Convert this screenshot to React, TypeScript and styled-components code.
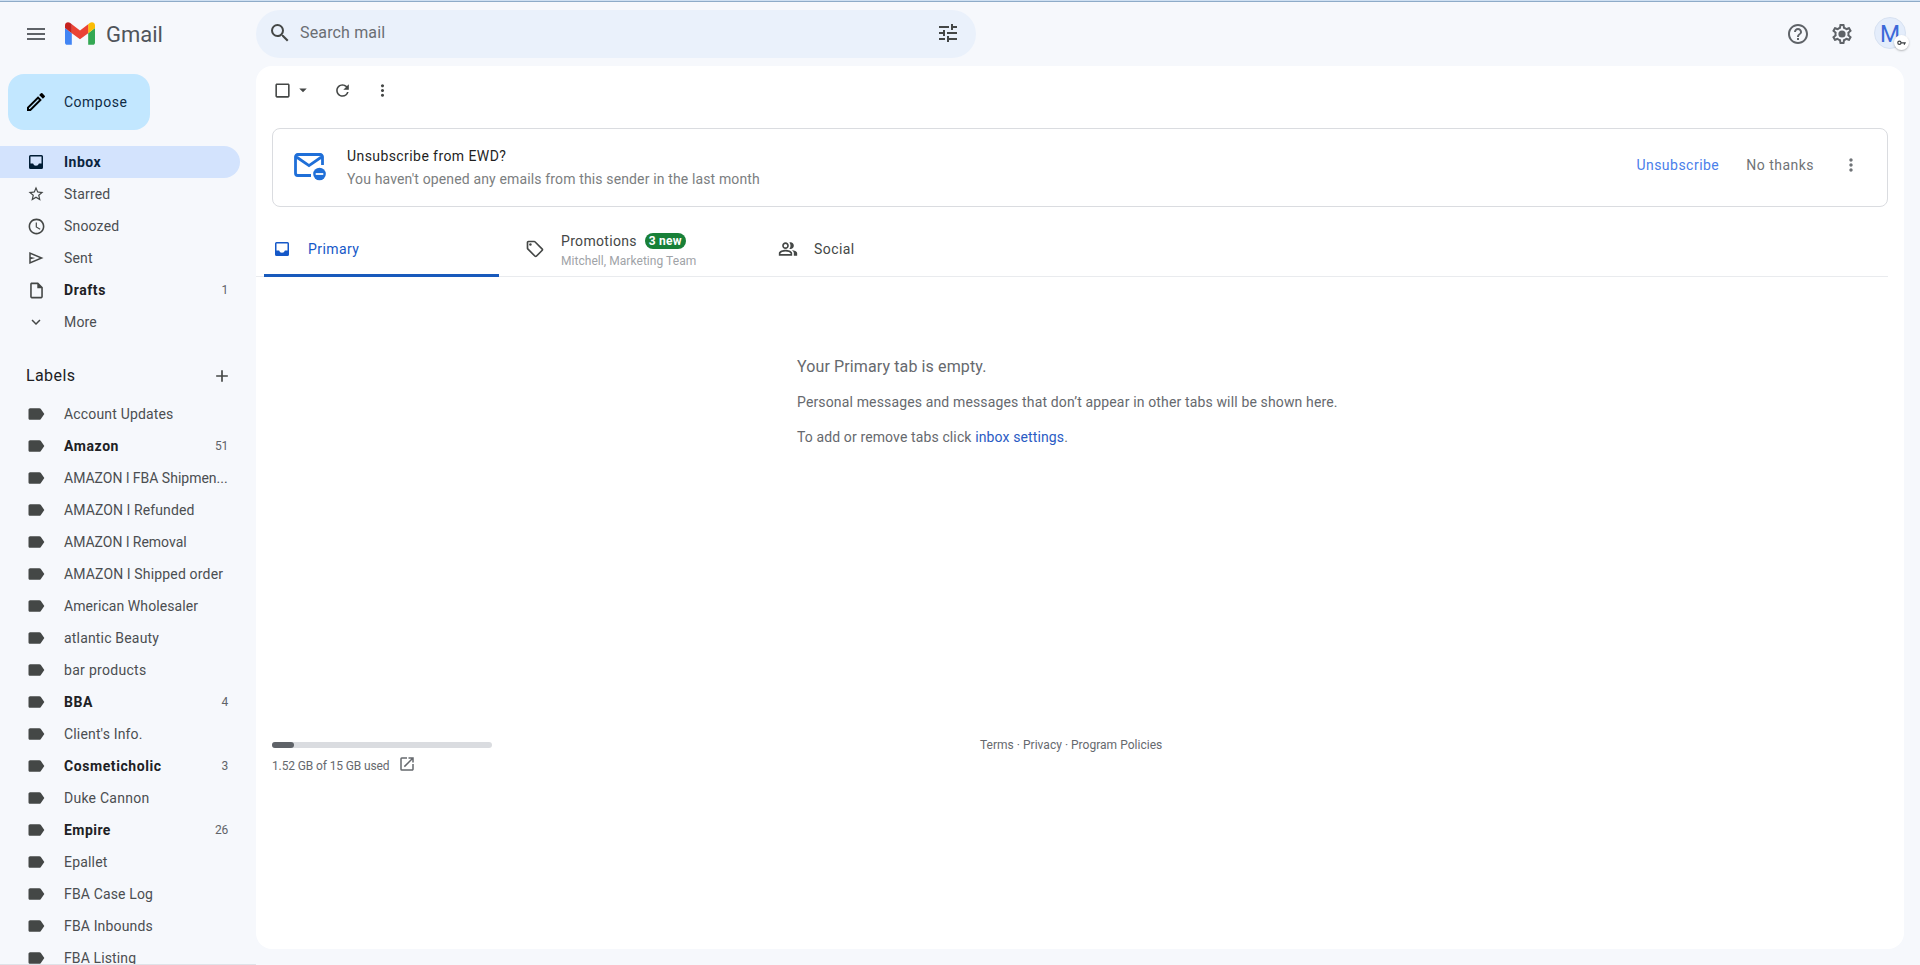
import React from "react";
import styled, { createGlobalStyle } from "styled-components";
import {
  MdStarBorder,
  MdSchedule,
  MdOutlineInsertDriveFile,
  MdExpandMore,
  MdLabel,
  MdAdd,
  MdMenu,
  MdSearch,
  MdTune,
  MdHelpOutline,
  MdOutlineModeEdit,
  MdRefresh,
  MdMoreVert,
  MdArrowDropDown,
  MdOutlineSell,
  MdOpenInNew,
  MdCheckBoxOutlineBlank,
} from "react-icons/md";

const GlobalStyle = createGlobalStyle`
  *, *::before, *::after { box-sizing: border-box; }
  html, body { margin: 0; padding: 0; overflow: hidden; }
  body { background: #f6f8fc; font-family: Roboto, "Liberation Sans", sans-serif; color: #444746; }
  svg { display: block; flex: none; }
`;

const Page = styled.div`
  height: 965px;
  display: flex;
  flex-direction: column;
  overflow: hidden;
  border-top: 1px solid #cfe0f2;
  background: #f6f8fc;
`;

const Header = styled.header`
  flex: none;
  height: 65px;
  border-top: 1px solid #8eabc8;
  display: flex;
`;

const Brand = styled.div`
  width: 256px;
  padding: 0 0 1px 24px;
  display: flex;
  align-items: center;
`;

const BrandName = styled.span`
  margin: 2px 0 0 11px;
  font-size: 22px;
  line-height: 28px;
  color: #50545a;
`;

const LogoSvg = styled.svg`
  margin-left: 17px;
`;

const SearchBar = styled.div`
  width: 720px;
  height: 48px;
  margin-top: 8px;
  padding: 0 16px 2px 12px;
  border-radius: 24px;
  background: #eaf1fb;
  display: flex;
  align-items: center;
  color: #444746;
`;

const SearchText = styled.span`
  flex: 1;
  margin: 0 0 2px 8px;
  font-size: 16px;
  letter-spacing: 0.15px;
  color: #6a6e73;
`;

const HeaderActions = styled.div`
  margin-left: auto;
  padding: 0 14px 1px 0;
  display: flex;
  align-items: center;
  gap: 20px;
  color: #5f6368;
`;

const Avatar = styled.div`
  position: relative;
  width: 32px;
  height: 32px;
  margin: -1px 0 0 0;
  border-radius: 50%;
  background: #e4edfb;
  border: 1px solid #d8e2f1;
  color: #3b68d8;
  font-size: 23px;
  line-height: 33px;
  text-align: center;
`;

const KeyBadge = styled.span`
  position: absolute;
  right: -4px;
  bottom: -2px;
  width: 15px;
  height: 15px;
  border-radius: 50%;
  background: #fff;
  box-shadow: 0 1px 2px rgba(60, 64, 67, 0.35);
  display: flex;
  align-items: center;
  justify-content: center;
`;

const Body = styled.div`
  flex: 1;
  min-height: 0;
  display: flex;
`;

const Sidebar = styled.aside`
  width: 256px;
  flex: none;
  overflow: hidden;
  border-bottom: 1px solid #dfe2e8;
`;

const ComposeButton = styled.div`
  width: 142px;
  height: 56px;
  margin: 8px 0 16px 8px;
  padding-left: 16px;
  border-radius: 16px;
  background: #c2e7ff;
  display: flex;
  align-items: center;
  gap: 16px;
  font-size: 14px;
  font-weight: 450;
  letter-spacing: 0.5px;
  color: #0f2b45;
  svg { color: #000; }
`;

const NavRow = styled.div<{ $active?: boolean; $bold?: boolean }>`
  width: 240px;
  height: 32px;
  padding: 0 12px 0 26px;
  border-radius: 0 16px 16px 0;
  background: ${(p) => (p.$active ? "#d3e3fd" : "transparent")};
  color: ${(p) => (p.$active ? "#0b2540" : p.$bold ? "#202124" : "#4b4e51")};
  font-weight: ${(p) => (p.$bold ? 700 : 400)};
  font-size: 14px;
  display: flex;
  align-items: center;
`;

const NavIcon = styled.span<{ $active?: boolean }>`
  width: 20px;
  flex: none;
  display: flex;
  justify-content: center;
  color: ${(p) => (p.$active ? "#001d35" : "#444746")};
`;

const NavText = styled.span<{ $track: number }>`
  flex: 1;
  margin-left: 18px;
  white-space: nowrap;
  letter-spacing: ${(p) => p.$track}px;
`;

const NavCount = styled.span`
  font-size: 12px;
  font-weight: 400;
  letter-spacing: -0.3px;
  color: #5f6368;
`;

const LabelsHeading = styled.div`
  height: 60px;
  padding: 15px 8px 0 26px;
  width: 240px;
  display: flex;
  align-items: center;
  justify-content: space-between;
  font-size: 16px;
  letter-spacing: 0.4px;
  color: #202124;
  svg { color: #444746; }
`;

const Main = styled.main`
  width: 1648px;
  height: 883px;
  border-radius: 16px;
  background: #fff;
  padding-right: 16px;
`;

const Toolbar = styled.div`
  height: 48px;
  padding: 0 0 0 16.5px;
  display: flex;
  align-items: center;
  color: #444746;
`;

const ToolSlot = styled.span<{ $gap: number }>`
  margin-left: ${(p) => p.$gap}px;
`;

const Banner = styled.section`
  height: 79px;
  margin: 14px 0 16px 16px;
  padding: 0 26px 5px 21px;
  border: 1px solid #dadce0;
  border-radius: 8px;
  display: flex;
  align-items: center;
`;

const BannerIcon = styled.span`
  padding-top: 4px;
`;

const BannerCopy = styled.div`
  flex: 1;
  margin-left: 21px;
  padding-top: 6px;
  display: flex;
  flex-direction: column;
`;

const BannerTitle = styled.span`
  font-size: 14px;
  font-weight: 450;
  line-height: 22px;
  letter-spacing: 0.42px;
  color: #1f1f1f;
`;

const BannerSub = styled.span`
  font-size: 14px;
  line-height: 25px;
  letter-spacing: 0.14px;
  color: #7b7e80;
`;

const BannerAction = styled.span<{ $primary?: boolean }>`
  margin-right: 27px;
  font-size: 14px;
  font-weight: 450;
  letter-spacing: 0.48px;
  color: ${(p) => (p.$primary ? "#4a80ea" : "#6f7377")};
`;

const Tabs = styled.nav`
  height: 54px;
  padding-left: 8px;
  border-bottom: 1px solid #e9ebee;
  display: flex;
`;

const Tab = styled.div<{ $active?: boolean }>`
  width: 235px;
  margin-right: 18px;
  margin-bottom: -1px;
  padding: 0 0 0 8px;
  display: flex;
  align-items: center;
  border-bottom: 3px solid ${(p) => (p.$active ? "#185abc" : "transparent")};
  border-radius: 3px 3px 0 0;
  color: ${(p) => (p.$active ? "#1558c8" : "#444746")};
  font-size: 14px;
  font-weight: 450;
`;

const TabCopy = styled.div<{ $stacked?: boolean }>`
  margin-left: 16px;
  padding-top: ${(p) => (p.$stacked ? 4 : 0)}px;
  letter-spacing: ${(p) => (p.$stacked ? 0.32 : 0.42)}px;
`;

const TabLine = styled.div`
  display: flex;
  align-items: center;
  height: 20px;
`;

const NewBadge = styled.span`
  margin-left: 8px;
  height: 16px;
  padding: 0 4px;
  border-radius: 8px;
  background: #188038;
  color: #fff;
  font-size: 12px;
  font-weight: 700;
  line-height: 16px;
  letter-spacing: 0.2px;
`;

const TabSub = styled.div`
  font-size: 12px;
  line-height: 20px;
  font-weight: 400;
  letter-spacing: 0.05px;
  color: #a0a3a7;
`;

const EmptyState = styled.section`
  margin: 78px 0 0 541px;
  height: 387px;
  color: #66696e;
`;

const EmptyTitle = styled.div`
  font-size: 16px;
  line-height: 24px;
  letter-spacing: 0.12px;
`;

const EmptyText = styled.div<{ $track: number }>`
  margin-top: 11px;
  font-size: 14px;
  line-height: 24px;
  letter-spacing: ${(p) => p.$track}px;
`;

const SettingsLink = styled.span`
  color: #2a5bc4;
`;

const Footer = styled.footer`
  display: flex;
  align-items: flex-start;
  padding-left: 16px;
  font-size: 12px;
  color: #66696e;
`;

const Storage = styled.div`
  width: 220px;
`;

const Meter = styled.div`
  height: 6px;
  border-radius: 3px;
  background: #dadce0;
`;

const MeterFill = styled.div`
  width: 10%;
  height: 6px;
  border-radius: 3px;
  background: #5f6368;
`;

const StorageText = styled.div`
  margin-top: 7px;
  display: flex;
  align-items: center;
  gap: 8px;
  height: 20px;
  letter-spacing: -0.12px;
  svg { margin-bottom: 2px; }
`;

const StorageLabel = styled.span`
  padding-top: 2px;
`;

const Policies = styled.div`
  margin: -5px 0 0 488px;
  line-height: 16px;
  letter-spacing: 0.02px;
`;

const GmailLogo = () => (
  <LogoSvg width="30" height="23" viewBox="52 42 88 66">
    <path fill="#4285f4" d="M58 108h14V74L52 59v43c0 3.32 2.69 6 6 6" />
    <path fill="#34a853" d="M120 108h14c3.32 0 6-2.69 6-6V59l-20 15" />
    <path fill="#fbbc04" d="M120 48v26l20-15v-8c0-7.42-8.47-11.65-14.4-7.2" />
    <path fill="#ea4335" d="M72 74V48l24 18 24-18v26L96 92" />
    <path fill="#c5221f" d="M52 51v8l20 15V48l-5.6-4.2c-5.94-4.45-14.4-.22-14.4 7.2" />
  </LogoSvg>
);

const SendIcon = () => (
  <svg width="18" height="18" viewBox="0 0 24 24" fill="currentColor">
    <path d="M3 20V4l19 8zm2-3 11.85-5L5 7v3.5l6 1.5-6 1.5z" />
  </svg>
);

const PeopleIcon = () => (
  <svg width="20" height="20" viewBox="0 0 24 24" fill="currentColor">
    <path d="M16.67 13.13C18.04 14.06 19 15.32 19 17v3h4v-3c0-2.18-3.57-3.47-6.33-3.87zM15 12c2.21 0 4-1.79 4-4s-1.79-4-4-4c-.47 0-.91.1-1.33.24C14.5 5.27 15 6.58 15 8s-.5 2.73-1.33 3.76c.42.14.86.24 1.33.24zM9 12c2.21 0 4-1.79 4-4s-1.79-4-4-4-4 1.79-4 4 1.79 4 4 4zm0-6c1.1 0 2 .9 2 2s-.9 2-2 2-2-.9-2-2 .9-2 2-2zm0 7c-2.67 0-8 1.34-8 4v3h16v-3c0-2.66-5.33-4-8-4zm6 5H3v-.99C3.2 16.29 6.3 15 9 15s5.8 1.29 6 2v1z" />
  </svg>
);

const GearIcon = () => (
  <svg width="24" height="24" viewBox="0 0 24 24" fill="currentColor">
    <path d="M19.43 12.98c.04-.32.07-.64.07-.98 0-.34-.03-.66-.07-.98l2.11-1.65c.19-.15.24-.42.12-.64l-2-3.46a.5.5 0 0 0-.61-.22l-2.49 1c-.52-.4-1.08-.73-1.69-.98l-.38-2.65A.488.488 0 0 0 14 2h-4c-.25 0-.46.18-.49.42l-.38 2.65c-.61.25-1.17.59-1.69.98l-2.49-1a.5.5 0 0 0-.61.22l-2 3.46c-.13.22-.07.49.12.64l2.11 1.65c-.04.32-.07.65-.07.98 0 .33.03.66.07.98l-2.11 1.65c-.19.15-.24.42-.12.64l2 3.46a.5.5 0 0 0 .61.22l2.49-1c.52.4 1.08.73 1.69.98l.38 2.65c.03.24.24.42.49.42h4c.25 0 .46-.18.49-.42l.38-2.65c.61-.25 1.17-.59 1.69-.98l2.49 1a.5.5 0 0 0 .61-.22l2-3.46c.12-.22.07-.49-.12-.64l-2.11-1.65zm-1.98-1.71c.04.31.05.52.05.73 0 .21-.02.43-.05.73l-.14 1.13.89.7 1.08.84-.7 1.21-1.27-.51-1.04-.42-.9.68c-.43.32-.84.56-1.25.73l-1.06.43-.16 1.13-.2 1.35h-1.4l-.19-1.35-.16-1.13-1.06-.43c-.43-.18-.83-.41-1.23-.71l-.91-.7-1.06.43-1.27.51-.7-1.21 1.08-.84.89-.7-.14-1.13c-.03-.31-.05-.54-.05-.74s.02-.43.05-.73l.14-1.13-.89-.7-1.08-.84.7-1.21 1.27.51 1.04.42.9-.68c.43-.32.84-.56 1.25-.73l1.06-.43.16-1.13.2-1.35h1.39l.19 1.35.16 1.13 1.06.43c.43.18.83.41 1.23.71l.91.7 1.06-.43 1.27-.51.7 1.21-1.07.85-.89.7.14 1.13z" />
    <circle cx="12" cy="12" r="3.6" />
  </svg>
);

const KeyIcon = () => (
  <svg width="9" height="6" viewBox="0 0 9 6" fill="none" stroke="#3c4043" strokeWidth="1.2">
    <circle cx="2.4" cy="2.8" r="1.6" />
    <path d="M4 2.8h4.8M7.4 2.8v2" />
  </svg>
);

const InboxIcon = () => (
  <svg width="20" height="20" viewBox="0 0 20 20" fill="currentColor" fillRule="evenodd">
    <path d="M4.5 3h11A1.5 1.5 0 0 1 17 4.5v11a1.5 1.5 0 0 1-1.500 1.500h-11A1.500 1.500 0 0 1 3 15.500v-11A1.500 1.500 0 0 1 4.500 3zm0 1.500v7h2.600a3 3 0 0 0 5.800 0h2.600v-7z" />
  </svg>
);

const UnsubscribeIcon = () => (
  <svg width="32" height="28" viewBox="0 0 32 28">
    <path
      d="M17 22.5H3.7a2.2 2.2 0 0 1-2.2-2.2V3.7a2.2 2.2 0 0 1 2.2-2.2h22.6a2.2 2.2 0 0 1 2.2 2.2V12M2.5 4l12.5 8.6L27.5 4"
      fill="none"
      stroke="#1f6fd8"
      strokeWidth="2.8"
    />
    <circle cx="25.5" cy="21" r="6.3" fill="#1f6fd8" />
    <path d="M21.7 21h7.6" stroke="#fff" strokeWidth="1.8" />
  </svg>
);

type NavItem = { text: string; icon: React.ReactNode; count?: number; active?: boolean; track?: number };

const folders: NavItem[] = [
  { text: "Inbox", icon: <InboxIcon />, active: true, track: 0.5 },
  { text: "Starred", icon: <MdStarBorder size={18} /> },
  { text: "Snoozed", icon: <MdSchedule size={19} /> },
  { text: "Sent", icon: <SendIcon /> },
  { text: "Drafts", icon: <MdOutlineInsertDriveFile size={19} />, count: 1 },
  { text: "More", icon: <MdExpandMore size={18} /> },
];

const labels: { text: string; count?: number; track?: number }[] = [
  { text: "Account Updates", track: 0.17 },
  { text: "Amazon", count: 51 },
  { text: "AMAZON l FBA Shipmen...", track: 0 },
  { text: "AMAZON l Refunded", track: 0.13 },
  { text: "AMAZON l Removal", track: 0 },
  { text: "AMAZON l Shipped order", track: 0.17 },
  { text: "American Wholesaler", track: 0.08 },
  { text: "atlantic Beauty" },
  { text: "bar products", track: 0.3 },
  { text: "BBA", count: 4 },
  { text: "Client's Info.", track: 0.16 },
  { text: "Cosmeticholic", count: 3 },
  { text: "Duke Cannon", track: 0.25 },
  { text: "Empire", count: 26, track: 0.45 },
  { text: "Epallet" },
  { text: "FBA Case Log", track: 0.15 },
  { text: "FBA Inbounds", track: 0.15 },
  { text: "FBA Listing", track: 0.12 },
];

const NavEntry = ({ text, icon, count, active, track }: NavItem) => {
  const bold = active || count !== undefined;
  return (
    <NavRow $active={active} $bold={bold}>
      <NavIcon $active={active}>{icon}</NavIcon>
      <NavText $track={track ?? (bold ? 0.58 : 0.18)}>{text}</NavText>
      {count !== undefined && <NavCount>{count}</NavCount>}
    </NavRow>
  );
};

export default function App() {
  return (
    <>
      <GlobalStyle />
      <Page>
        <Header>
          <Brand>
            <MdMenu size={24} color="#5f6368" />
            <GmailLogo />
            <BrandName>Gmail</BrandName>
          </Brand>
          <SearchBar>
            <MdSearch size={24} />
            <SearchText>Search mail</SearchText>
            <MdTune size={24} />
          </SearchBar>
          <HeaderActions>
            <MdHelpOutline size={24} />
            <GearIcon />
            <Avatar>
              M
              <KeyBadge>
                <KeyIcon />
              </KeyBadge>
            </Avatar>
          </HeaderActions>
        </Header>
        <Body>
          <Sidebar>
            <ComposeButton>
              <MdOutlineModeEdit size={24} />
              Compose
            </ComposeButton>
            {folders.map((f) => (
              <NavEntry key={f.text} {...f} />
            ))}
            <LabelsHeading>
              Labels
              <MdAdd size={20} />
            </LabelsHeading>
            {labels.map((l) => (
              <NavEntry key={l.text} {...l} icon={<MdLabel size={20} />} />
            ))}
          </Sidebar>
          <Main>
            <Toolbar>
              <MdCheckBoxOutlineBlank size={19} />
              <ToolSlot $gap={2}>
                <MdArrowDropDown size={18} />
              </ToolSlot>
              <ToolSlot $gap={21}>
                <MdRefresh size={19} />
              </ToolSlot>
              <ToolSlot $gap={21}>
                <MdMoreVert size={19} />
              </ToolSlot>
            </Toolbar>
            <Banner>
              <BannerIcon>
                <UnsubscribeIcon />
              </BannerIcon>
              <BannerCopy>
                <BannerTitle>Unsubscribe from EWD?</BannerTitle>
                <BannerSub>You haven't opened any emails from this sender in the last month</BannerSub>
              </BannerCopy>
              <BannerAction $primary>Unsubscribe</BannerAction>
              <BannerAction>No thanks</BannerAction>
              <MdMoreVert size={20} color="#6f7377" />
            </Banner>
            <Tabs>
              <Tab $active>
                <InboxIcon />
                <TabCopy>Primary</TabCopy>
              </Tab>
              <Tab>
                <MdOutlineSell size={20} />
                <TabCopy $stacked>
                  <TabLine>
                    Promotions
                    <NewBadge>3 new</NewBadge>
                  </TabLine>
                  <TabSub>Mitchell, Marketing Team</TabSub>
                </TabCopy>
              </Tab>
              <Tab>
                <PeopleIcon />
                <TabCopy>Social</TabCopy>
              </Tab>
            </Tabs>
            <EmptyState>
              <EmptyTitle>Your Primary tab is empty.</EmptyTitle>
              <EmptyText $track={0.145}>
                Personal messages and messages that don’t appear in other tabs will be shown here.
              </EmptyText>
              <EmptyText $track={0.12}>
                To add or remove tabs click <SettingsLink>inbox settings</SettingsLink>.
              </EmptyText>
            </EmptyState>
            <Footer>
              <Storage>
                <Meter>
                  <MeterFill />
                </Meter>
                <StorageText>
                  <StorageLabel>1.52 GB of 15 GB used</StorageLabel>
                  <MdOpenInNew size={18} />
                </StorageText>
              </Storage>
              <Policies>Terms · Privacy · Program Policies</Policies>
            </Footer>
          </Main>
        </Body>
      </Page>
    </>
  );
}
